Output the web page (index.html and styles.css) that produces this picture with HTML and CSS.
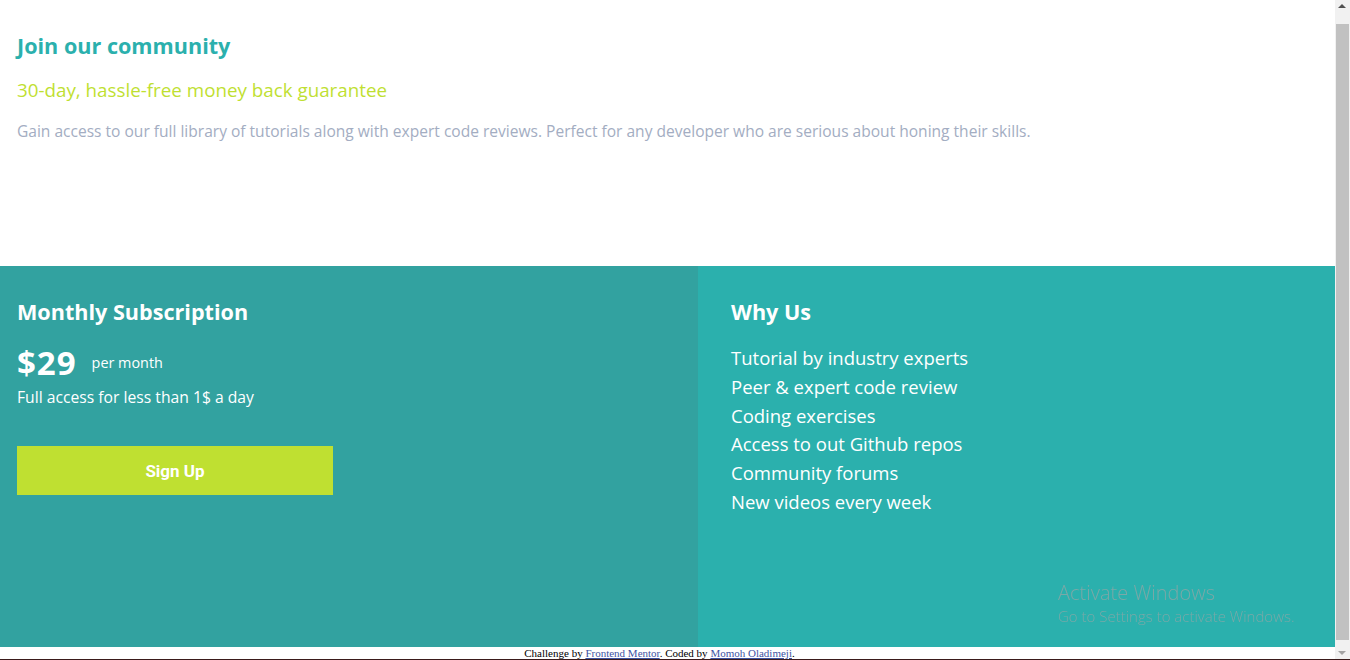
FILE: index.html
```html
<!DOCTYPE html>
<html lang="en">
<head>
<meta charset="utf-8">
<title>Single Price Grid Component</title>
<link rel="stylesheet" href="styles.css">
</head>
<body>
<div class="page">
  <section class="intro">
    <h1 class="intro-title">Join our community</h1>
    <h2 class="intro-sub">30-day, hassle-free money back guarantee</h2>
    <p class="intro-text">Gain access to our full library of tutorials along with expert code reviews. Perfect for any developer who are serious about honing their skills.</p>
  </section>
  <section class="grid">
    <div class="sub">
      <h3 class="col-title">Monthly Subscription</h3>
      <div class="price-row">
        <span class="price">$29</span>
        <span class="per">per month</span>
      </div>
      <p class="access">Full access for less than 1$ a day</p>
      <button class="signup">Sign Up</button>
    </div>
    <div class="why">
      <h3 class="col-title">Why Us</h3>
      <ul class="why-list">
        <li>Tutorial by industry experts</li>
        <li>Peer &amp; expert code review</li>
        <li>Coding exercises</li>
        <li>Access to out Github repos</li>
        <li>Community forums</li>
        <li>New videos every week</li>
      </ul>
    </div>
  </section>
  <footer class="attribution">
    Challenge by <a href="#">Frontend Mentor</a>. Coded by <a href="#">Momoh Oladimeji</a>.
  </footer>
</div>
<div class="scrollbar">
  <div class="sb-up"></div>
  <div class="sb-thumb"></div>
  <div class="sb-down"></div>
</div>
<div class="watermark">
  <div class="wm-title">Activate Windows</div>
  <div class="wm-sub">Go to Settings to activate Windows.</div>
</div>
<div class="taskbar-edge"></div>
</body>
</html>
```
FILE: styles.css
```css
html, body {
  margin: 0;
  padding: 0;
  height: 660px;
  overflow: hidden;
  background: #fff;
}

.page {
  width: 1335px;
  font-family: "Open Sans", Lato, sans-serif;
}

.intro {
  height: 266px;
  box-sizing: border-box;
  padding: 33px 17px 0;
}

.intro-title {
  margin: 0;
  font-size: 21.6px;
  line-height: 26px;
  font-weight: 700;
  color: #2bb0ad;
}

.intro-sub {
  margin: 18px 0 0;
  font-size: 18.8px;
  line-height: 26px;
  font-weight: 400;
  color: #bfdf32;
}

.intro-text {
  margin: 18px 0 0;
  font-size: 15.55px;
  line-height: 20px;
  color: #a3adc2;
}

.grid {
  display: flex;
  height: 381px;
  color: #fff;
}

.sub {
  width: 698px;
  background: #32a2a0;
  box-sizing: border-box;
  padding: 33px 0 0 17px;
}

.why {
  flex: 1;
  background: #2bb0ad;
  padding: 33px 0 0 33px;
}

.col-title {
  margin: 0;
  font-size: 21.6px;
  line-height: 26px;
  font-weight: 700;
}

.price-row {
  display: flex;
  align-items: center;
  gap: 15px;
  margin-top: 20px;
  height: 36px;
}

.price {
  font-size: 33px;
  font-weight: 700;
  letter-spacing: 1px;
  line-height: 36px;
}

.per {
  font-size: 14.4px;
  line-height: 20px;
}

.access {
  margin: 6px 0 0;
  font-size: 15.7px;
  line-height: 20px;
}

.signup {
  display: block;
  margin-top: 39px;
  width: 316px;
  height: 49px;
  border: 0;
  background: #bfe031;
  color: #fff;
  font-family: Roboto, sans-serif;
  font-size: 17px;
  font-weight: 700;
  cursor: pointer;
}

.why-list {
  list-style: none;
  margin: 19px 0 0;
  padding: 0;
  font-size: 18.5px;
  line-height: 28.8px;
}

.attribution {
  font-family: "Liberation Serif", serif;
  font-size: 11px;
  line-height: 12px;
  text-align: center;
  padding-right: 16px;
  color: #000;
}

.attribution a {
  color: #3e54a3;
}

.scrollbar {
  position: fixed;
  top: 0;
  right: 0;
  width: 15px;
  height: 659px;
  background: #f1f1f1;
  display: flex;
  flex-direction: column;
}

.sb-up, .sb-down {
  height: 17px;
  position: relative;
}

.sb-up::after, .sb-down::after {
  content: "";
  position: absolute;
  left: 3px;
  border-left: 4px solid transparent;
  border-right: 4px solid transparent;
}

.sb-up::after {
  top: 4px;
  border-bottom: 4px solid #505050;
}

.sb-down::after {
  bottom: 4px;
  border-top: 4px solid #a3a3a3;
}

.sb-thumb {
  flex: 1;
  margin: 7px 1px 2px;
  background: #c1c1c1;
}

.watermark {
  position: fixed;
  left: 1058px;
  top: 580px;
  font-family: "Open Sans", sans-serif;
  color: rgba(165, 165, 165, 0.65);
}

.wm-title {
  font-size: 20px;
  line-height: 26px;
  font-weight: 300;
}

.wm-sub {
  font-size: 15px;
  line-height: 20px;
  font-weight: 300;
}

.taskbar-edge {
  position: fixed;
  left: 0;
  bottom: 0;
  width: 100%;
  height: 1px;
  background: #3a1a1a;
}
```
